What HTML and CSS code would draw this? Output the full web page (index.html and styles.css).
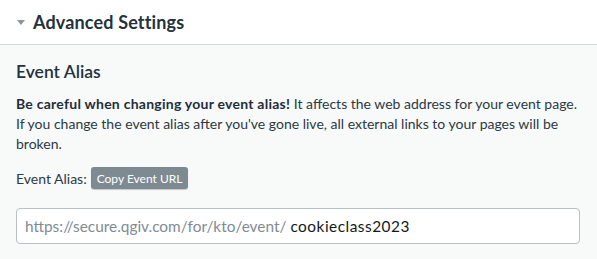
FILE: index.html
```html
<!DOCTYPE html>
<html>
<head>
<meta charset="utf-8">
<link rel="stylesheet" href="styles.css">
</head>
<body>
<div class="section">
  <div class="section-header">
    <span class="caret"></span>
    <h1 class="section-title">Advanced Settings</h1>
  </div>
  <div class="section-body">
    <h2 class="field-title">Event Alias</h2>
    <p class="warning"><strong>Be careful when changing your event alias!</strong> It affects the web address for your event page. If you change the event alias after you've gone live, all external links to your pages will be broken.</p>
    <div class="alias-row">
      <span class="alias-label">Event Alias:</span>
      <button class="copy-btn" type="button">Copy Event URL</button>
    </div>
    <div class="url-input">
      <span class="url-prefix">https://secure.qgiv.com/for/kto/event/</span>
      <span class="url-value">cookieclass2023</span>
    </div>
  </div>
</div>
</body>
</html>
```

FILE: styles.css
```css
html, body {
  margin: 0;
  padding: 0;
  background: #ffffff;
}
body {
  font-family: Lato, "Liberation Sans", sans-serif;
  color: #2b3a45;
}
.section {
  width: 597px;
  height: 259px;
  overflow: hidden;
}
.section-header {
  display: flex;
  align-items: center;
  gap: 8px;
  height: 44px;
  padding-left: 17px;
  border-bottom: 1px solid #d5d9dc;
  background: #fff;
}
.caret {
  width: 0;
  height: 0;
  border-left: 4px solid transparent;
  border-right: 4px solid transparent;
  border-top: 5px solid #8d969d;
  margin-top: 1px;
}
.section-title {
  margin: 0;
  font-size: 18px;
  font-weight: 700;
  color: #23323d;
  letter-spacing: 0.15px;
}
.section-body {
  background: #f8f9f9;
  padding: 15px 17px 20px 16px;
  height: 214px;
  box-sizing: border-box;
}
.field-title {
  margin: 0 0 10px;
  font-size: 17.5px;
  font-weight: 600;
  line-height: 24px;
  color: #23323d;
}
.warning {
  margin: 0 0 13px;
  font-size: 14px;
  line-height: 20px;
  color: #2b3a45;
}
.warning strong {
  font-weight: 700;
  color: #1f2e39;
  letter-spacing: 0.25px;
}
.alias-row {
  display: flex;
  align-items: center;
  gap: 4px;
  height: 22px;
  margin-bottom: 19px;
}
.alias-label {
  font-size: 14px;
  color: #2b3a45;
}
.copy-btn {
  font-family: inherit;
  font-size: 12px;
  color: #ffffff;
  background: #7e8a91;
  border: none;
  border-radius: 3px;
  height: 22px;
  padding: 0 6px;
  box-shadow: 0 1px 1px rgba(0,0,0,0.2);
}
.url-input {
  display: flex;
  align-items: center;
  height: 36px;
  box-sizing: border-box;
  border: 1px solid #b9c1c7;
  border-radius: 4px;
  background: #ffffff;
  padding: 0 8px;
  font-size: 15.4px;
}
.url-prefix {
  color: #808c94;
}
.url-value {
  color: #111a20;
  margin-left: 4px;
  letter-spacing: 0.5px;
}
```
